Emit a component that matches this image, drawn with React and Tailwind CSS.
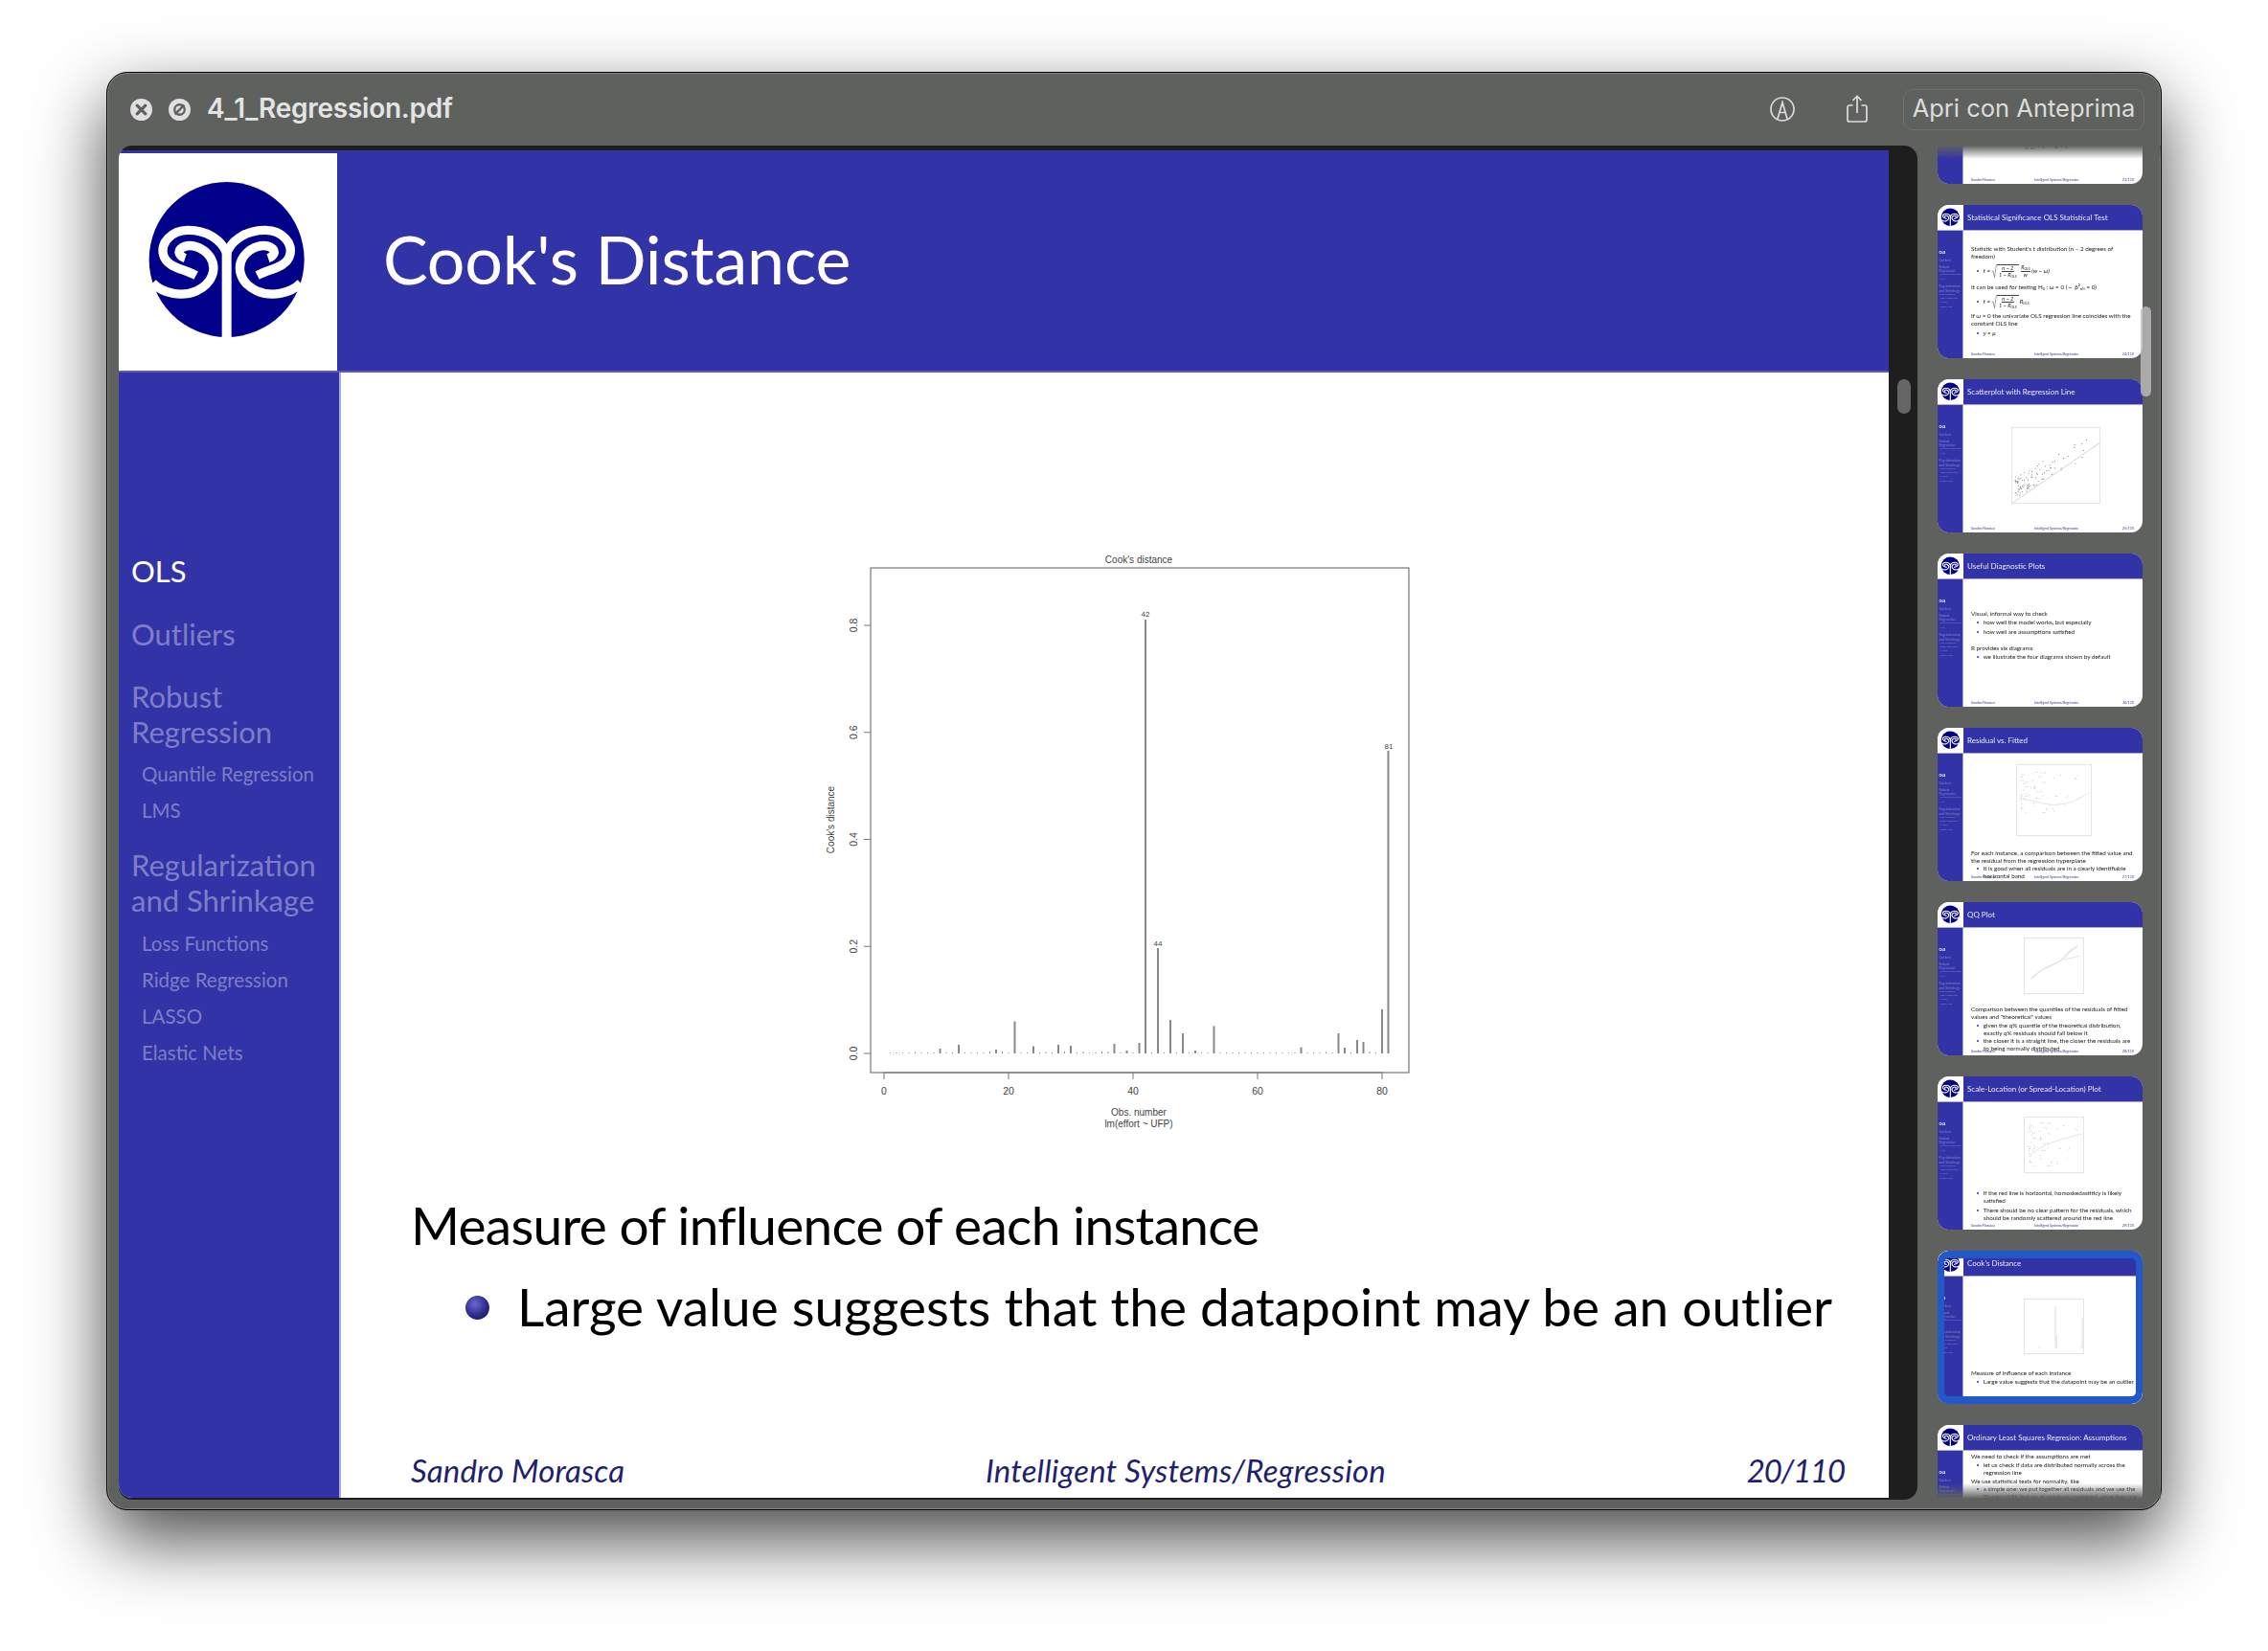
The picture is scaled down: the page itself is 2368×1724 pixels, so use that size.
import React from 'react'

function Logo({ className }) {
  const left = 'M290 268 C272 222 222 195 168 196 C116 197 82 236 92 274 C102 312 152 316 194 338'
  const under = 'M58 362 C92 396 150 406 196 386 C244 364 262 318 238 280 C216 248 172 234 146 254 C136 264 142 278 160 284'
  return (
    <svg viewBox="-48 -45 684 681" className={className} preserveAspectRatio="none">
      <rect x="-48" y="-45" width="684" height="681" fill="#fff" />
      <circle cx="290" cy="288" r="243" fill="#00008b" />
      <g fill="none" stroke="#fff" strokeWidth="28">
        <path d={left} />
        <path d={under} />
        <g transform="translate(580 0) scale(-1 1)">
          <path d={left} />
          <path d={under} />
        </g>
        <path d="M290 250 V540" strokeWidth="30" />
      </g>
    </svg>
  )
}

const nav = [
  { t: 'OLS', cls: 'text-white', big: true, mt: 'mt-0' },
  { t: 'Outliers', big: true, mt: 'mt-[29px]' },
  { t: 'Robust', big: true, mt: 'mt-[28px]' },
  { t: 'Regression', big: true, mt: 'mt-0' },
  { t: 'Quantile Regression', mt: 'mt-[6px]' },
  { t: 'LMS', mt: 'mt-0' },
  { t: 'Regularization', big: true, mt: 'mt-[20px]' },
  { t: 'and Shrinkage', big: true, mt: 'mt-0' },
  { t: 'Loss Functions', mt: 'mt-[7px]' },
  { t: 'Ridge Regression', mt: 'mt-0' },
  { t: 'LASSO', mt: 'mt-0' },
  { t: 'Elastic Nets', mt: 'mt-0' },
]

const bars = {
  1: 1, 2: 1, 3: 1, 4: 1, 5: 1.5, 6: 1, 7: 1, 8: 1, 9: 5, 10: 1, 11: 1, 12: 9, 13: 1, 14: 1, 15: 1, 16: 1, 17: 2, 18: 4, 19: 2, 20: 1,
  21: 33.5, 22: 1, 23: 1, 24: 7.5, 25: 1, 26: 1.5, 27: 1, 28: 9, 29: 2, 30: 8, 31: 1, 32: 2, 33: 1, 34: 1, 35: 2, 36: 2, 37: 10, 38: 1, 39: 3, 40: 1,
  41: 11, 42: 453, 43: 1, 44: 110, 45: 1, 46: 35, 47: 1, 48: 21, 49: 1, 50: 3, 51: 1, 52: 1, 53: 28.6, 54: 1, 55: 1, 56: 1, 57: 1, 58: 1, 59: 1, 60: 1,
  61: 1, 62: 1, 63: 1, 64: 1, 65: 1, 66: 1, 67: 6.5, 68: 1, 69: 1, 70: 1, 71: 1.5, 72: 1, 73: 21, 74: 6, 75: 1, 76: 14, 77: 12, 78: 2, 79: 1, 80: 46, 81: 316,
}

function CookChart() {
  const x = n => 83 + n * 6.5
  const y0 = 540
  const yOf = v => y0 - v * 558.75
  return (
    <svg width="660" height="640" viewBox="0 0 660 640" className="block" fontFamily="Liberation Sans, Arial, sans-serif" fill="#444">
      <text x="349" y="28" fontSize="10" textAnchor="middle">Cook's distance</text>
      <rect x="69" y="33" width="562" height="527" fill="none" stroke="#777" strokeWidth="1.2" />
      {Object.entries(bars).map(([k, h]) => (
        <line key={k} x1={x(+k)} x2={x(+k)} y1={y0} y2={y0 - h} stroke="#888" strokeWidth={h > 2 ? 2 : 1} />
      ))}
      <text x="356" y="84" fontSize="8" textAnchor="middle">42</text>
      <text x="369" y="428" fontSize="8" textAnchor="middle">44</text>
      <text x="610" y="222" fontSize="8" textAnchor="middle">81</text>
      <path d="M83 560 H603.5" stroke="#777" fill="none" />
      {[0, 20, 40, 60, 80].map(n => (
        <g key={n}>
          <line x1={x(n)} x2={x(n)} y1="560" y2="567" stroke="#777" />
          <text x={x(n)} y="583" fontSize="10.5" textAnchor="middle">{n}</text>
        </g>
      ))}
      {[0, 0.2, 0.4, 0.6, 0.8].map(v => (
        <g key={v}>
          <line x1="62" x2="69" y1={yOf(v)} y2={yOf(v)} stroke="#777" />
          <text transform={`translate(55 ${yOf(v)}) rotate(-90)`} fontSize="10.5" textAnchor="middle">{v.toFixed(1)}</text>
        </g>
      ))}
      <text transform="translate(31 296) rotate(-90)" fontSize="10" textAnchor="middle">Cook's distance</text>
      <text x="349" y="605" fontSize="10" textAnchor="middle">Obs. number</text>
      <text x="349" y="617" fontSize="10" textAnchor="middle">lm(effort ~ UFP)</text>
    </svg>
  )
}

// points for the tiny scatter plots, always the same ones
function scatter(n, seed) {
  const pts = []
  let s = seed
  const rnd = () => {
    s = (s * 9301 + 49297) % 233280
    return s / 233280
  }
  for (let i = 0; i < n; i++) {
    const a = rnd() * rnd()
    pts.push([a, rnd()])
  }
  return pts
}

function MiniChart({ kind, w, h, cls }) {
  const pts = scatter(kind === 'scatter' ? 90 : 70, kind.length * 37)
  return (
    <svg width={w} height={h} viewBox={`0 0 ${w} ${h}`} className={`block ${cls}`}>
      <rect x=".5" y=".5" width={w - 1} height={h - 1} fill="#fff" stroke="#e4e4e4" />
      {kind === 'scatter' && (
        <>
          {pts.map((p, i) => <circle key={i} cx={4 + p[0] * 85} cy={h - 6 - p[0] * 48 - p[1] * 22} r=".6" fill="#888" />)}
          <line x1="0" y1={h} x2={w} y2="16" stroke="#d4d4d4" />
        </>
      )}
      {kind === 'resid' && (
        <>
          {pts.map((p, i) => <circle key={i} cx={4 + p[0] * 70} cy={8 + p[1] * 45} r=".5" fill="#bbb" />)}
          <path d={`M3 36 C24 38 30 44 46 42 S68 34 ${w - 3} 30`} fill="none" stroke="#f4dede" />
        </>
      )}
      {kind === 'qq' && (
        <>
          <path d={`M8 ${h - 16} C20 ${h - 30} 35 ${h - 30} 42 ${h - 38} S52 ${h - 48} 56 ${h - 50}`} fill="none" stroke="#e2e2e2" strokeWidth="1.5" />
          <path d={`M42 ${h - 36} L${w - 4} ${h - 40}`} stroke="#f4dede" fill="none" />
        </>
      )}
      {kind === 'scale' && (
        <>
          {pts.map((p, i) => <circle key={i} cx={5 + p[0] * 60} cy={6 + p[1] * 48} r=".5" fill="#bbb" />)}
          <path d={`M6 ${h - 18} C20 ${h - 30} 30 26 ${w - 3} 18`} fill="none" stroke="#f4dede" />
        </>
      )}
      {kind === 'cook' && (
        <>
          <line x1="33" x2="33" y1={h - 6} y2="8" stroke="#ddd" />
          <line x1="34.5" x2="34.5" y1={h - 6} y2={h - 20} stroke="#e4e4e4" />
          <line x1="61" x2="61" y1={h - 6} y2="20" stroke="#e0e0e0" />
          <line x1="60" x2="60" y1={h - 6} y2={h - 11} stroke="#e8e8e8" />
          <line x1="16" x2="16" y1={h - 6} y2={h - 9} stroke="#e8e8e8" />
        </>
      )}
    </svg>
  )
}

function Root({ children }) {
  return (
    <span className="mx-[1px] inline-flex items-center">
      <svg width="6" height="14" viewBox="0 0 6 14" fill="none" stroke="#444" strokeWidth=".5"><path d="M.5 8 L2 7 L3.4 13.5 L5.5 .5 H6" /></svg>
      <span className="flex flex-col items-center border-t-[0.5px] border-[#444] px-[1px] text-[5.6px] leading-[6.5px]">{children}</span>
    </span>
  )
}

function Frac({ top, bottom }) {
  return (
    <span className="mx-[1px] inline-flex flex-col items-center text-[5.6px] leading-[6.5px]">
      <span className="border-b-[0.5px] border-[#444] px-[.5px]">{top}</span>
      <span>{bottom}</span>
    </span>
  )
}

const ols = <span>R<sub className="text-[3.6px] leading-none">OLS</sub></span>
const r2 = <span>1 − R<sub className="text-[3.6px] leading-none">OLS</sub></span>

function Line({ t, b, mt, tall }) {
  return (
    <div className={`flex items-center whitespace-nowrap text-[6.3px] leading-[8px] text-[#222] ${tall ? 'h-[14px]' : 'h-[8px]'} ${b ? 'pl-[6px]' : ''} ${mt || ''}`}>
      {b && <span className="mr-[4.5px] h-[2.2px] w-[2.2px] shrink-0 rounded-full bg-[#3333a8]" />}
      {t}
    </div>
  )
}

function Thumb({ title, lines, chart, active, top, page }) {
  return (
    <div className="relative h-[160px] w-[214px] shrink-0 overflow-hidden rounded-[12px] bg-white">
      <div className="flex h-[160px] flex-col blur-[0.45px]">
        <div className="flex h-[27px] shrink-0 border-b border-[#a9a9dc] bg-[#3333a8]">
          <Logo className="h-[26px] w-[27px] shrink-0" />
          <div className="whitespace-nowrap pl-[4px] text-[8px] leading-[26px] text-[#e8e8f8]">{title}</div>
        </div>
        <div className="flex min-h-0 flex-1">
          <div className="w-[27px] shrink-0 overflow-hidden border-r border-[#a9a9dc] bg-[#3333a8] pl-[1.5px] pt-[21px] text-[#8080c8]">
            {nav.map(n => (
              <div key={n.t} className={`whitespace-nowrap ${n.big ? 'text-[3.6px] leading-[4.2px]' : 'pl-[1px] text-[2.5px] leading-[4.3px]'} ${n.t === 'OLS' ? 'font-bold text-white' : ''} ${n.t === 'Outliers' || n.t === 'Robust' || n.t === 'Regularization' ? 'mt-[3.3px]' : ''}`}>{n.t}</div>
            ))}
          </div>
          <div className={`min-w-0 flex-1 overflow-hidden pl-[8px] ${top || ''}`}>
            {chart}
            {lines.map((l, i) => <Line key={i} {...l} />)}
          </div>
        </div>
        <div className="absolute bottom-[2px] left-[35px] right-[9px] grid grid-cols-[66px_1fr_auto] text-[3.7px] italic leading-[5px] text-[#333388]">
          <span>Sandro Morasca</span>
          <span>Intelligent Systems/Regression</span>
          <span>{page}</span>
        </div>
      </div>
      {active && <div className="absolute inset-0 rounded-[12px] border-x-[7px] border-y-[8px] border-[#2358c8]" />}
    </div>
  )
}

const thumbs = [
  {
    title: 'Statistical Significance OLS',
    top: 'pt-[90px]',
    page: '23/110',
    lines: [{ t: <span className="pl-[57px] italic">ρ̂²ₒₗₛ = 0 ⇔ ω = 0</span> }],
  },
  {
    title: 'Statistical Significance OLS Statistical Test',
    top: 'pt-[15px]',
    page: '24/110',
    lines: [
      { t: "Statistic with Student's t distribution (n − 2 degrees of" },
      { t: 'freedom)' },
      { t: <span className="flex items-center italic">t =<Root><Frac top="n − 2" bottom={r2} /></Root><Frac top={ols} bottom="w" />(w − ω)</span>, b: 1, mt: 'mt-[4px]', tall: true },
      { t: 'It can be used for testing H₀ : ω = 0 (⇔ ρ̂²ₒₗₛ = 0)', mt: 'mt-[6px]' },
      { t: <span className="flex items-center italic">t =<Root><Frac top="n − 2" bottom={r2} /></Root>{ols}</span>, b: 1, mt: 'mt-[4px]', tall: true },
      { t: 'If ω = 0 the univariate OLS regression line coincides with the', mt: 'mt-[4px]' },
      { t: 'constant OLS line' },
      { t: <span className="italic">y = μ</span>, b: 1, mt: 'mt-[2px]' },
    ],
  },
  {
    title: 'Scatterplot with Regression Line',
    top: 'pt-[23px]',
    page: '25/110',
    chart: <MiniChart kind="scatter" w={93} h={80} cls="ml-[42px]" />,
    lines: [],
  },
  {
    title: 'Useful Diagnostic Plots',
    top: 'pt-[32px]',
    page: '26/110',
    lines: [
      { t: 'Visual, informal way to check' },
      { t: 'how well the model works, but especially', b: 1, mt: 'mt-[1px]' },
      { t: 'how well are assumptions satisfied', b: 1, mt: 'mt-[2px]' },
      { t: 'R provides six diagrams', mt: 'mt-[9px]' },
      { t: 'we illustrate the four diagrams shown by default', b: 1, mt: 'mt-[1px]' },
    ],
  },
  {
    title: 'Residual vs. Fitted',
    top: 'pt-[11px]',
    page: '27/110',
    chart: <MiniChart kind="resid" w={79} h={75} cls="ml-[47px]" />,
    lines: [
      { t: 'For each instance, a comparison between the fitted value and', mt: 'mt-[14px]' },
      { t: 'the residual from the regression hyperplane' },
      { t: 'it is good when all residuals are in a clearly identifiable', b: 1 },
      { t: <span className="pl-[13px]">horizontal band</span> },
    ],
  },
  {
    title: 'QQ Plot',
    top: 'pt-[10px]',
    page: '28/110',
    chart: <MiniChart kind="qq" w={63} h={59} cls="ml-[55px]" />,
    lines: [
      { t: 'Comparison between the quantiles of the residuals of fitted', mt: 'mt-[12px]' },
      { t: 'values and "theoretical" values' },
      { t: 'given the q% quantile of the theoretical distribution,', b: 1, mt: 'mt-[1px]' },
      { t: <span className="pl-[13px]">exactly q% residuals should fall below it</span> },
      { t: 'the closer it is a straight line, the closer the residuals are', b: 1 },
      { t: <span className="pl-[13px]">to being normally distributed</span> },
    ],
  },
  {
    title: 'Scale-Location (or Spread-Location) Plot',
    top: 'pt-[15px]',
    page: '29/110',
    chart: <MiniChart kind="scale" w={63} h={59} cls="ml-[55px]" />,
    lines: [
      { t: 'If the red line is horizontal, homoskedastiticy is likely', b: 1, mt: 'mt-[17px]' },
      { t: <span className="pl-[13px]">satisfied</span> },
      { t: 'There should be no clear pattern for the residuals, which', b: 1, mt: 'mt-[2px]' },
      { t: <span className="pl-[13px]">should be randomly scattered around the red line</span> },
    ],
  },
  {
    title: "Cook's Distance",
    top: 'pt-[23px]',
    page: '30/110',
    active: true,
    chart: <MiniChart kind="cook" w={63} h={58} cls="ml-[55px]" />,
    lines: [
      { t: 'Measure of influence of each instance', mt: 'mt-[16px]' },
      { t: 'Large value suggests that the datapoint may be an outlier', b: 1, mt: 'mt-[1px]' },
    ],
  },
  {
    title: 'Ordinary Least Squares Regresion: Assumptions',
    top: 'pt-[2px]',
    page: '31/110',
    lines: [
      { t: 'We need to check if the assumptions are met' },
      { t: 'let us check if data are distributed normally across the', b: 1, mt: 'mt-[1px]' },
      { t: <span className="pl-[13px]">regression line</span> },
      { t: 'We use statistical tests for normality, like', mt: 'mt-[1px]' },
      { t: 'a simple one: we put together all residuals and we use the', b: 1 },
      { t: <span className="pl-[13px]">Shapiro-Wilk test on all residuals combined, since they are</span> },
    ],
  },
]

export default function App() {
  return (
    <div className="h-[1724px] w-[2368px] overflow-hidden bg-white pl-[111px] pt-[75px] font-['Lato',sans-serif]">
      <div className="flex h-[1502px] w-[2146px] flex-col rounded-[22px] border border-black bg-[#5f615f] shadow-[0_30px_75px_rgba(0,0,0,0.72),inset_0_0_0_1px_#858685]">
        {/* title bar */}
        <div className="flex h-[76px] shrink-0 items-center pl-[24px] pr-[17px]">
          <svg viewBox="0 0 24 24" className="h-[23px] w-[23px]">
            <circle cx="12" cy="12" r="12" fill="#dfe0df" />
            <path d="M7.5 7.5 L16.5 16.5 M16.5 7.5 L7.5 16.5" stroke="#5f615f" strokeWidth="3.4" strokeLinecap="round" />
          </svg>
          <svg viewBox="0 0 24 24" className="ml-[17px] h-[23px] w-[23px]">
            <circle cx="12" cy="12" r="12" fill="#dfe0df" />
            <circle cx="12" cy="12" r="5.5" fill="none" stroke="#5f615f" strokeWidth="2.4" />
            <path d="M7 17 L17 7" stroke="#5f615f" strokeWidth="2.6" />
          </svg>
          <div className="ml-[17px] -mt-[2px] font-['Inter',sans-serif] text-[28px] font-semibold tracking-[-0.25px] text-[#e4e4e4]">4_1_Regression.pdf</div>
          <div className="ml-auto flex items-center">
            <svg viewBox="0 0 26 26" className="h-[26px] w-[26px]" fill="none" stroke="#dcdcdc" strokeWidth="1.7">
              <circle cx="13" cy="13" r="12" />
              <path d="M7.8 23.5 L13 6 L18.2 23.5 M10 16.5 H16" />
            </svg>
            <svg viewBox="0 0 22 29" className="ml-[54px] -mt-[2px] h-[29px] w-[22px]" fill="none" stroke="#dcdcdc" strokeWidth="1.7">
              <path d="M6.5 11 H3 a2 2 0 0 0 -2 2 V26 a2 2 0 0 0 2 2 H19 a2 2 0 0 0 2 -2 V13 a2 2 0 0 0 -2 -2 H15.5" />
              <path d="M11 19 V1.5 M6.5 6 L11 1.5 L15.5 6" />
            </svg>
            <div className="ml-[37px] flex h-[43px] w-[252px] items-center justify-center rounded-[10px] border border-[#707270] pb-[1px] font-['Inter',sans-serif] text-[25.5px] text-[#dcdcdc]">Apri con Anteprima</div>
          </div>
        </div>

        <div className="flex min-h-0 flex-1 pl-[12px]">
          {/* pdf page */}
          <div className="flex h-[1414px] w-[1878px] shrink-0 overflow-hidden rounded-[14px] bg-[#1e1e1e] pb-[2px] pt-[5px]">
            <div className="flex w-[1848px] shrink-0 flex-col overflow-hidden rounded-bl-[14px] bg-white">
              <div className="flex h-[232px] shrink-0 border-b-2 border-[#5a5ac0] bg-[#3333a8]">
                <div className="w-[228px] shrink-0 pt-[3px]">
                  <Logo className="h-[227px] w-[228px]" />
                </div>
                <h1 className="pl-[48px] pt-[69px] text-[70px] font-normal leading-[88px] tracking-[-0.2px] text-white">Cook's Distance</h1>
              </div>
              <div className="flex min-h-0 flex-1">
                <div className="w-[232px] shrink-0 border-r-2 border-[#a9a9e6] bg-[#3333a8] pl-[13px] pt-[189px] text-[#7e7ec6]">
                  {nav.map(n => (
                    <div key={n.t} className={`whitespace-nowrap ${n.big ? 'text-[31px] leading-[37px]' : 'pl-[11px] text-[20.5px] leading-[38px]'} ${n.cls || ''} ${n.mt}`}>{n.t}</div>
                  ))}
                </div>
                <div className="flex min-w-0 flex-1 flex-col pt-[171px]">
                  <div className="pl-[484px]">
                    <CookChart />
                  </div>
                  <div className="mt-[46px] pl-[73px] text-[55px] leading-[66px] tracking-[-0.7px] text-black">Measure of influence of each instance</div>
                  <div className="mt-[19px] flex items-center pl-[130px] text-[55px] leading-[66px] text-black">
                    <span className="mr-[29px] mt-[3px] h-[25px] w-[25px] shrink-0 rounded-full bg-[radial-gradient(circle_at_40%_35%,#6a6ad0,#2a2a8c_55%,#101048)]" />
                    <span>Large value suggests that the datapoint may be an outlier</span>
                  </div>
                  <div className="mt-auto grid grid-cols-[600px_1fr_auto] pb-[10px] pl-[73px] pr-[46px] text-[33px] italic leading-[37px] tracking-[0.15px] text-[#1f1f70]">
                    <span>Sandro Morasca</span>
                    <span>Intelligent Systems/Regression</span>
                    <span className="tracking-[-1.2px]">20/110</span>
                  </div>
                </div>
              </div>
            </div>
            <div className="flex-1 pl-[9px] pt-[239px]">
              <div className="h-[36px] w-[14px] rounded-full bg-[#666]" />
            </div>
          </div>

          {/* thumbnails */}
          <div className="relative h-[1413px] min-w-0 flex-1 overflow-hidden">
            <div className="-mt-[120px] flex flex-col gap-[22px] pl-[21px]">
              {thumbs.map(t => (
                <Thumb key={t.page} title={t.title} lines={t.lines} chart={t.chart} top={t.top} active={t.active} page={t.page} />
              ))}
            </div>
            <div className="absolute inset-x-0 top-0 h-[14px] bg-gradient-to-b from-[#5f615f] to-transparent" />
            <div className="absolute inset-x-0 bottom-0 h-[16px] bg-gradient-to-t from-[#5f615f] to-transparent" />
            <div className="absolute left-[233px] top-[168px] h-[94px] w-[11px] rounded-full bg-[#bdbdbd]/80" />
          </div>
        </div>
      </div>
    </div>
  )
}
